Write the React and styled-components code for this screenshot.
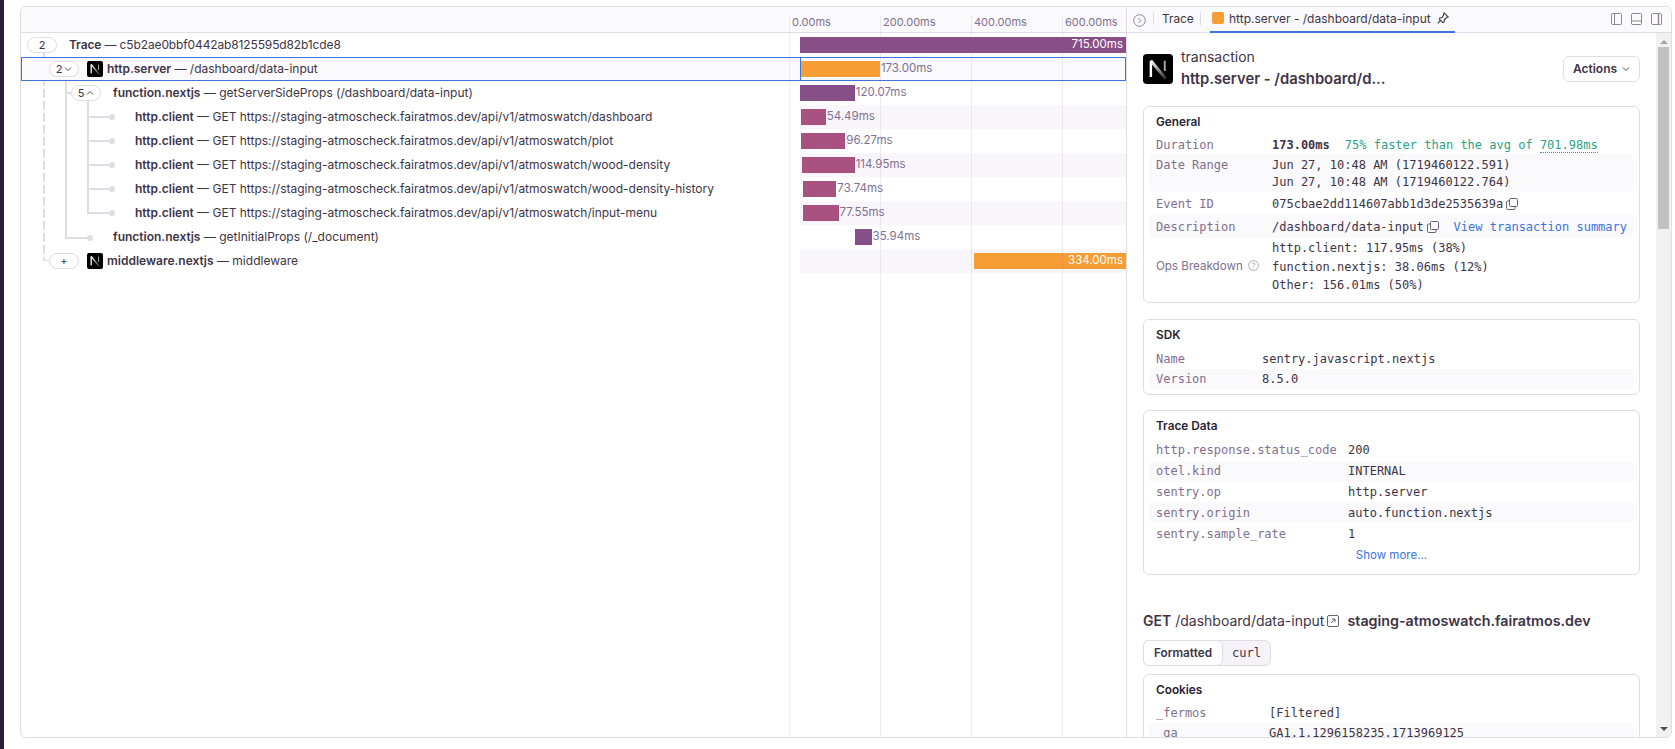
import React from "react";
import styled, { createGlobalStyle } from "styled-components";

const SANS = '"Inter", "Noto Sans", sans-serif';
const MONO = '"DejaVu Sans Mono", "Liberation Mono", monospace';
const BORDER = "#e0dce5";
const TEXT = "#3e3446";
const MUTED = "#80708f";
const BLUE = "#3c74dd";
const ORANGE = "#f69d34";
const PURPLE = "#864f87";
const PINK = "#a95281";
const PX_PER_MS = 326 / 715;

const GlobalStyle = createGlobalStyle`
  html, body { margin: 0; padding: 0; height: 100%; background: #fff; overflow: hidden; }
  #root { height: 100%; }
  * { box-sizing: border-box; }
`;

const Page = styled.div`
  height: 749px;
  display: flex;
  font-family: ${SANS};
  font-size: 12px;
  color: ${TEXT};
`;
const SideStrip = styled.div`
  width: 4px;
  background: #2b1d38;
  flex: none;
`;
const Panel = styled.div`
  margin: 6px 3px 11px 16px;
  flex: 1;
  min-width: 0;
  display: flex;
  border: 1px solid ${BORDER};
  border-radius: 6px;
  overflow: hidden;
`;

/* left side: tree + timeline */
const TracePane = styled.div`
  position: relative;
  width: 1106px;
  flex: none;
  border-right: 1px solid ${BORDER};
`;
const PaneHeader = styled.div`
  height: 26px;
  display: flex;
  background: #faf9fb;
  border-bottom: 1px solid ${BORDER};
`;
const TreeHeader = styled.div`
  width: 768px;
  flex: none;
`;
const Ticks = styled.div`
  flex: 1;
  display: flex;
  overflow: hidden;
  padding-right: 14px;
`;
const Tick = styled.div`
  width: 91px;
  flex: none;
  padding: 8px 0 0 3px;
  font-size: 11px;
  line-height: 14px;
  color: ${MUTED};
  white-space: nowrap;
`;
const GridLine = styled.div`
  position: absolute;
  top: 8px;
  bottom: 0;
  width: 1px;
  background: rgba(128, 112, 143, 0.13);
  z-index: 3;
  pointer-events: none;
`;
const Rows = styled.div`
  position: relative;
`;
const Row = styled.div`
  height: 24px;
  display: flex;
  align-items: center;
  position: relative;
  background: ${(p) => (p.$selected ? "#faf9fb" : "transparent")};
  outline: ${(p) => (p.$selected ? `1px solid ${BLUE}` : "none")};
  outline-offset: -1px;
  z-index: ${(p) => (p.$selected ? 2 : "auto")};
`;
const TreeCell = styled.div`
  width: 768px;
  flex: none;
  display: flex;
  align-items: center;
  padding-left: ${(p) => p.$depth * 22 + 6}px;
  white-space: nowrap;
`;
const PillSlot = styled.div`
  width: 30px;
  flex: none;
  margin-right: ${(p) => (p.$icon ? 8 : 12)}px;
  position: relative;
  z-index: 2;
`;
const Pill = styled.div`
  height: 16px;
  border: 1px solid ${BORDER};
  border-radius: 8px;
  background: #fff;
  display: flex;
  align-items: center;
  justify-content: center;
  gap: 2px;
  font-size: 11px;
  line-height: 14px;
  color: ${TEXT};
`;
const RowIcon = styled.span`
  display: flex;
  flex: none;
  margin-right: 4px;
`;
const Label = styled.span`
  font-size: 12px;
  line-height: 14px;
  padding-bottom: 1px;
  font-weight: 400;
  color: ${TEXT};
  letter-spacing: ${(p) => (p.$tight ? "-0.13px" : "0")};
  strong { font-weight: 600; }
`;
const TrackGutter = styled.div`
  width: 11px;
  height: 100%;
  flex: none;
`;
const Track = styled.div`
  position: relative;
  flex: 1;
  height: 100%;
  background: ${(p) => (p.$striped ? "#f8f6fa" : "transparent")};
  border-left: ${(p) => (p.$selected ? `1px solid ${BLUE}` : "none")};
`;
const Bar = styled.div`
  position: absolute;
  top: 4px;
  height: 16px;
  background: ${(p) => p.$color};
`;
const BarLabel = styled.span`
  position: absolute;
  top: 4px;
  font-size: 11.5px;
  line-height: 14px;
  white-space: nowrap;
  color: ${(p) => (p.$inside ? "#fff" : MUTED)};
  ${(p) => (p.$inside ? "right: 3px;" : "")}
`;
const Line = styled.div`
  position: absolute;
  left: ${(p) => p.$x}px;
  top: ${(p) => p.$y}px;
  width: ${(p) => p.$w}px;
  height: ${(p) => p.$h}px;
  background: ${(p) =>
    p.$dashed
      ? `repeating-linear-gradient(to bottom, ${BORDER} 0 9px, transparent 9px 12px)`
      : BORDER};
  z-index: 1;
`;
const Dot = styled.div`
  position: absolute;
  left: ${(p) => p.$x - 3}px;
  top: ${(p) => p.$y - 3}px;
  width: 6px;
  height: 6px;
  border-radius: 50%;
  background: ${BORDER};
  z-index: 1;
`;

/* right side: drawer */
const Drawer = styled.div`
  flex: 1;
  min-width: 0;
  display: flex;
  flex-direction: column;
`;
const TabBar = styled.div`
  height: 26px;
  flex: none;
  display: flex;
  align-items: stretch;
  background: #faf9fb;
  border-bottom: 1px solid ${BORDER};
  padding-left: 6px;
`;
const TabIconSlot = styled.div`
  display: flex;
  align-items: center;
  padding-top: 1px;
  padding-right: 7px;
  color: #8f8599;
`;
const TabSep = styled.div`
  width: 1px;
  background: ${BORDER};
  margin: 5px 0 7px;
`;
const PlainTab = styled.div`
  width: 46px;
  padding: 0 0 2px 8px;
  display: flex;
  align-items: center;
  font-size: 11.8px;
`;
const ActiveTab = styled.div`
  margin-left: 9px;
  display: flex;
  align-items: center;
  gap: 5px;
  width: 245px;
  padding: 0 0 2px 2px;
  margin-bottom: -1px;
  border-bottom: 2px solid ${BLUE};
  font-size: 12px;
  white-space: nowrap;
`;
const Swatch = styled.span`
  width: 12px;
  height: 12px;
  border-radius: 2px;
  background: ${ORANGE};
  flex: none;
`;
const PinSlot = styled.span`
  display: flex;
  flex: none;
  margin-left: 1px;
`;
const LayoutIcons = styled.div`
  margin-left: auto;
  display: flex;
  align-items: center;
  gap: 9px;
  padding: 0 9px 1px 0;
  color: #8f8599;
`;
const DrawerBody = styled.div`
  flex: 1;
  min-height: 0;
  display: flex;
`;
const Content = styled.div`
  flex: 1;
  min-width: 0;
  overflow: hidden;
  padding: 21px 16px 0;
`;
const Scrollbar = styled.div`
  width: 15px;
  flex: none;
  background: #f1f1f1;
  display: flex;
  flex-direction: column;
  align-items: center;
`;
const ScrollUp = styled.div`
  margin-top: 7px;
  width: 0;
  height: 0;
  border-left: 4px solid transparent;
  border-right: 4px solid transparent;
  border-bottom: 4px solid #a3a3a3;
`;
const ScrollThumb = styled.div`
  margin-top: 3px;
  width: 11px;
  height: 182px;
  background: #c1c1c1;
`;
const ScrollDown = styled.div`
  margin-top: auto;
  margin-bottom: 6px;
  width: 0;
  height: 0;
  border-left: 4px solid transparent;
  border-right: 4px solid transparent;
  border-top: 4px solid #505050;
`;
const TitleRow = styled.div`
  display: flex;
  align-items: flex-start;
  height: 52px;
`;
const TitleText = styled.div`
  margin-left: 8px;
  flex: 1;
  margin-top: -8px;
`;
const TitleOp = styled.div`
  font-size: 14px;
  line-height: 22px;
`;
const TitleName = styled.div`
  font-size: 14.8px;
  line-height: 22px;
  font-weight: 600;
`;
const ActionsButton = styled.div`
  margin-top: 2px;
  width: 77px;
  height: 26px;
  padding-bottom: 1px;
  border: 1px solid ${BORDER};
  border-radius: 6px;
  display: flex;
  align-items: center;
  justify-content: center;
  gap: 5px;
  font-size: 12px;
  font-weight: 600;
`;
const Card = styled.section`
  border: 1px solid ${BORDER};
  border-radius: 6px;
  padding: 8px 5px ${(p) => p.$bottom ?? 6}px;
  margin-bottom: ${(p) => p.$gap ?? 16}px;
`;
const CardTitle = styled.div`
  padding-left: 7px;
  font-size: 11.8px;
  line-height: 14px;
  font-weight: 600;
  color: #2b2233;
  margin-bottom: ${(p) => p.$gap ?? 7}px;
`;
const KvRow = styled.div`
  display: flex;
  align-items: ${(p) => p.$align || "center"};
  height: ${(p) => p.$h || 20}px;
  padding: ${(p) => (p.$align ? "3px" : "0")} 7px 0;
  border-radius: 4px;
  background: ${(p) => (p.$striped ? "#faf9fb" : "transparent")};
`;
const Key = styled.div`
  width: ${(p) => p.$w}px;
  flex: none;
  font-family: ${(p) => (p.$sans ? SANS : MONO)};
  font-size: ${(p) => (p.$sans ? "11.6px" : "12px")};
  line-height: 16px;
  margin-bottom: ${(p) => (p.$sans ? 3 : 0)}px;
  color: ${MUTED};
  display: flex;
  align-items: center;
  gap: 5px;
`;
const Value = styled.div`
  font-family: ${MONO};
  font-size: 12px;
  line-height: ${(p) => p.$line || 16}px;
  color: ${TEXT};
  white-space: pre;
  display: ${(p) => (p.$flex ? "flex" : "block")};
  align-items: center;
  gap: 3px;
  flex: ${(p) => (p.$flex ? 1 : "none")};
`;
const Strong = styled.span`
  font-weight: 700;
`;
const Faster = styled.span`
  color: #2ba185;
  margin-left: 15px;
`;
const Dotted = styled.span`
  border-bottom: 1px dotted #2ba185;
`;
const MonoLink = styled.span`
  margin-left: auto;
  color: ${BLUE};
`;
const ShowMore = styled.div`
  text-align: center;
  color: ${BLUE};
  font-size: 11.5px;
  line-height: 20px;
  margin-top: 1px;
`;
const RequestHeading = styled.div`
  margin-top: 36px;
  display: flex;
  align-items: center;
  font-size: 14px;
  line-height: 20px;
  white-space: nowrap;
  strong { font-weight: 600; }
`;
const Host = styled.span`
  margin-left: 8px;
  font-size: 14.3px;
  font-weight: 600;
`;
const Segmented = styled.div`
  margin: 9px 0 8px;
  width: 128px;
  height: 26px;
  display: flex;
  background: #f5f3f7;
  border: 1px solid ${BORDER};
  border-radius: 6px;
`;
const SegmentOn = styled.div`
  width: 80px;
  margin: -1px 0 -1px -1px;
  background: #fff;
  border: 1px solid ${BORDER};
  border-radius: 6px;
  display: flex;
  align-items: center;
  justify-content: center;
  font-size: 11.8px;
  font-weight: 600;
`;
const SegmentOff = styled.div`
  flex: 1;
  display: flex;
  align-items: center;
  justify-content: center;
  font-family: ${MONO};
  font-size: 12px;
  color: ${TEXT};
`;

const NextLogo = ({ size = 16, id }) => (
  <svg width={size} height={size} viewBox="0 0 16 16" style={{ flex: "none" }}>
    <defs>
      <linearGradient id={id} x1="0" y1="0" x2="1" y2="1">
        <stop offset="0" stopColor="#fff" />
        <stop offset="1" stopColor="#fff" stopOpacity="0.15" />
      </linearGradient>
    </defs>
    <rect width="16" height="16" rx="2" fill="#000" />
    <path d="M4.2 3.6v8.6" stroke="#fff" strokeWidth="1.3" fill="none" />
    <path d="M4.2 3.6l8 9.6" stroke={`url(#${id})`} strokeWidth="1.6" fill="none" />
    <path d="M11.6 3.6v5.4" stroke="#aaa" strokeWidth="1" fill="none" />
  </svg>
);

const Chevron = ({ up, size = 8 }) => (
  <svg width={size} height={size} viewBox="0 0 8 8" fill="none" stroke="currentColor" strokeWidth="0.9">
    <path d={up ? "M1 5.5l3-3 3 3" : "M1 2.5l3 3 3-3"} />
  </svg>
);

const CopyIcon = () => (
  <svg width="12" height="12" viewBox="0 0 12 12" fill="none" stroke="#6b5f78" strokeWidth="1" style={{ flex: "none" }}>
    <rect x="3.5" y="0.5" width="8" height="8" rx="1" />
    <path d="M3.5 3H1.5a1 1 0 0 0-1 1v6.5a1 1 0 0 0 1 1H8a1 1 0 0 0 1-1V8.5" />
  </svg>
);

const HelpIcon = () => (
  <svg width="11" height="11" viewBox="0 0 11 11" fill="none" stroke="#a99fb3" strokeWidth="0.9">
    <circle cx="5.5" cy="5.5" r="4.9" />
    <path d="M4 4.3c0-2 3-2 3 0 0 1-1.5 1-1.5 2.2" />
    <path d="M5.5 7.6v.8" />
  </svg>
);

const CircleChevron = () => (
  <svg width="13" height="13" viewBox="0 0 13 13" fill="none" stroke="currentColor" strokeWidth="1">
    <circle cx="6.5" cy="6.5" r="5.8" />
    <path d="M5.3 4l2.5 2.5L5.3 9" />
  </svg>
);

const PinIcon = () => (
  <svg width="12" height="12" viewBox="0 0 11 11" fill="none" stroke={TEXT} strokeWidth="1">
    <path d="M6.5 0.8l3.7 3.7-1.2.4-2.2 2.2-.2 2-1.2.6-3.2-3.2.6-1.2 2-.2L6 2.6z" />
    <path d="M3.2 7.8L0.6 10.4" />
  </svg>
);

const LayoutIcon = ({ divider }) => (
  <svg width="11" height="12" viewBox="0 0 11 12" fill="none" stroke="currentColor" strokeWidth="1">
    <rect x="0.5" y="0.5" width="10" height="11" rx="1" />
    {divider === "left" && <path d="M3.5 0.5v11" />}
    {divider === "bottom" && <path d="M0.5 8h10" strokeWidth="1.2" />}
    {divider === "right" && <path d="M7.5 0.5v11" strokeWidth="1.4" />}
  </svg>
);

const ExternalIcon = () => (
  <svg width="12" height="12" viewBox="0 0 12 12" fill="none" stroke="#6b5f78" strokeWidth="1" style={{ margin: "0 0 0 3px", flex: "none" }}>
    <rect x="0.5" y="0.5" width="11" height="11" rx="1.5" />
    <path d="M4 8l4-4M5 4h3v3" />
  </svg>
);

const rows = [
  { id: "trace", depth: 0, pill: "2", tight: true, op: "Trace", desc: "c5b2ae0bbf0442ab8125595d82b1cde8", start: 0, ms: 715, color: "#874f85", label: "715.00ms", inside: true },
  { id: "server", depth: 1, pill: "2", chevron: "down", icon: true, op: "http.server", desc: "/dashboard/data-input", start: 0, ms: 173, color: ORANGE, label: "173.00ms", selected: true },
  { id: "ssp", depth: 2, pill: "5", chevron: "up", op: "function.nextjs", desc: "getServerSideProps (/dashboard/data-input)", start: 0, ms: 120.07, color: PURPLE, label: "120.07ms" },
  { id: "c1", depth: 3, op: "http.client", desc: "GET https://staging-atmoscheck.fairatmos.dev/api/v1/atmoswatch/dashboard", start: 2, ms: 54.49, color: PINK, label: "54.49ms", striped: true },
  { id: "c2", depth: 3, op: "http.client", desc: "GET https://staging-atmoscheck.fairatmos.dev/api/v1/atmoswatch/plot", start: 3, ms: 96.27, color: PINK, label: "96.27ms" },
  { id: "c3", depth: 3, op: "http.client", desc: "GET https://staging-atmoscheck.fairatmos.dev/api/v1/atmoswatch/wood-density", start: 5, ms: 114.95, color: PINK, label: "114.95ms", striped: true },
  { id: "c4", depth: 3, op: "http.client", desc: "GET https://staging-atmoscheck.fairatmos.dev/api/v1/atmoswatch/wood-density-history", start: 6, ms: 73.74, color: PINK, label: "73.74ms" },
  { id: "c5", depth: 3, op: "http.client", desc: "GET https://staging-atmoscheck.fairatmos.dev/api/v1/atmoswatch/input-menu", start: 7, ms: 77.55, color: PINK, label: "77.55ms", striped: true },
  { id: "gip", depth: 2, op: "function.nextjs", desc: "getInitialProps (/_document)", start: 121, ms: 35.94, color: PURPLE, label: "35.94ms" },
  { id: "mw", depth: 1, pill: "+", icon: true, op: "middleware.nextjs", desc: "middleware", start: 381, ms: 334, color: ORANGE, label: "334.00ms", inside: true, striped: true },
];

const traceData = [
  ["http.response.status_code", "200"],
  ["otel.kind", "INTERNAL"],
  ["sentry.op", "http.server"],
  ["sentry.origin", "auto.function.nextjs"],
  ["sentry.sample_rate", "1"],
];

const RowView = ({ row }) => {
  const left = row.start * PX_PER_MS;
  const width = row.ms * PX_PER_MS;
  return (
    <Row $selected={row.selected}>
      <TreeCell $depth={row.depth}>
        <PillSlot $icon={row.icon}>
          {row.pill && (
            <Pill>
              {row.pill}
              {row.chevron && <Chevron up={row.chevron === "up"} />}
            </Pill>
          )}
        </PillSlot>
        {row.icon && (
          <RowIcon>
            <NextLogo id={`logo-${row.id}`} />
          </RowIcon>
        )}
        <Label $tight={row.tight}>
          <strong>{row.op}</strong> — {row.desc}
        </Label>
      </TreeCell>
      <TrackGutter />
      <Track $striped={row.striped} $selected={row.selected}>
        <Bar $color={row.color} style={{ left, width }} />
        {row.inside ? (
          <BarLabel $inside>{row.label}</BarLabel>
        ) : (
          <BarLabel style={{ left: left + width + 1 }}>{row.label}</BarLabel>
        )}
      </Track>
    </Row>
  );
};

export default function App() {
  return (
    <Page>
      <GlobalStyle />
      <SideStrip />
      <Panel>
        <TracePane>
          <PaneHeader>
            <TreeHeader />
            <Ticks>
              {["0.00ms", "200.00ms", "400.00ms", "600.00ms"].map((t) => (
                <Tick key={t}>{t}</Tick>
              ))}
            </Ticks>
          </PaneHeader>
          <GridLine style={{ left: 768 }} />
          <GridLine style={{ left: 859 }} />
          <GridLine style={{ left: 950 }} />
          <GridLine style={{ left: 1041 }} />
          <Rows>
            <Line $dashed $x={22} $y={20} $w={2} $h={208} />
            <Line $x={22} $y={35} $w={6} $h={1} />
            <Line $x={22} $y={227} $w={6} $h={1} />
            <Line $x={44} $y={44} $w={2} $h={161} />
            <Line $x={44} $y={59} $w={6} $h={2} />
            <Line $x={44} $y={204} $w={25} $h={2} />
            <Dot $x={69} $y={205} />
            <Line $x={66} $y={68} $w={2} $h={113} />
            {[84, 108, 132, 156, 180].map((y) => (
              <React.Fragment key={y}>
                <Line $x={66} $y={y - 1} $w={25} $h={2} />
                <Dot $x={91} $y={y} />
              </React.Fragment>
            ))}
            {rows.map((row) => (
              <RowView key={row.id} row={row} />
            ))}
          </Rows>
        </TracePane>
        <Drawer>
          <TabBar>
            <TabIconSlot>
              <CircleChevron />
            </TabIconSlot>
            <TabSep />
            <PlainTab>Trace</PlainTab>
            <TabSep />
            <ActiveTab>
              <Swatch />
              http.server - /dashboard/data-input
              <PinSlot>
                <PinIcon />
              </PinSlot>
            </ActiveTab>
            <LayoutIcons>
              <LayoutIcon divider="left" />
              <LayoutIcon divider="bottom" />
              <LayoutIcon divider="right" />
            </LayoutIcons>
          </TabBar>
          <DrawerBody>
            <Content>
              <TitleRow>
                <NextLogo size={30} id="logo-title" />
                <TitleText>
                  <TitleOp>transaction</TitleOp>
                  <TitleName>http.server - /dashboard/d...</TitleName>
                </TitleText>
                <ActionsButton>
                  Actions <Chevron />
                </ActionsButton>
              </TitleRow>

              <Card $bottom={6}>
                <CardTitle $gap={6}>General</CardTitle>
                <KvRow $h={19}>
                  <Key $w={116}>Duration</Key>
                  <Value>
                    <Strong>173.00ms</Strong>
                    <Faster>
                      75% faster than the avg of <Dotted>701.98ms</Dotted>
                    </Faster>
                  </Value>
                </KvRow>
                <KvRow $striped $h={38} $align="flex-start">
                  <Key $w={116}>Date Range</Key>
                  <Value $line={17}>
                    {"Jun 27, 10:48 AM (1719460122.591)\nJun 27, 10:48 AM (1719460122.764)"}
                  </Value>
                </KvRow>
                <KvRow $h={23}>
                  <Key $w={116}>Event ID</Key>
                  <Value $flex>
                    075cbae2dd114607abb1d3de2535639a
                    <CopyIcon />
                  </Value>
                </KvRow>
                <KvRow $striped $h={23}>
                  <Key $w={116}>Description</Key>
                  <Value $flex>
                    /dashboard/data-input
                    <CopyIcon />
                    <MonoLink>View transaction summary</MonoLink>
                  </Value>
                </KvRow>
                <KvRow $h={58}>
                  <Key $w={116} $sans>
                    Ops Breakdown <HelpIcon />
                  </Key>
                  <Value $line={18.5}>
                    {"http.client: 117.95ms (38%)\nfunction.nextjs: 38.06ms (12%)\nOther: 156.01ms (50%)"}
                  </Value>
                </KvRow>
              </Card>

              <Card $bottom={5} $gap={15}>
                <CardTitle>SDK</CardTitle>
                <KvRow>
                  <Key $w={106}>Name</Key>
                  <Value>sentry.javascript.nextjs</Value>
                </KvRow>
                <KvRow $striped>
                  <Key $w={106}>Version</Key>
                  <Value>8.5.0</Value>
                </KvRow>
              </Card>

              <Card $bottom={9} $gap={0}>
                <CardTitle>Trace Data</CardTitle>
                {traceData.map(([k, v], i) => (
                  <KvRow key={k} $h={20.8} $striped={i % 2 === 1}>
                    <Key $w={192}>{k}</Key>
                    <Value>{v}</Value>
                  </KvRow>
                ))}
                <ShowMore>Show more...</ShowMore>
              </Card>

              <RequestHeading>
                <strong>GET</strong>&nbsp;/dashboard/data-input
                <ExternalIcon />
                <Host>staging-atmoswatch.fairatmos.dev</Host>
              </RequestHeading>
              <Segmented>
                <SegmentOn>Formatted</SegmentOn>
                <SegmentOff>curl</SegmentOff>
              </Segmented>
              <Card>
                <CardTitle $gap={6}>Cookies</CardTitle>
                <KvRow>
                  <Key $w={113}>_fermos</Key>
                  <Value>[Filtered]</Value>
                </KvRow>
                <KvRow $striped>
                  <Key $w={113}>_ga</Key>
                  <Value>GA1.1.1296158235.1713969125</Value>
                </KvRow>
              </Card>
            </Content>
            <Scrollbar>
              <ScrollUp />
              <ScrollThumb />
              <ScrollDown />
            </Scrollbar>
          </DrawerBody>
        </Drawer>
      </Panel>
    </Page>
  );
}
